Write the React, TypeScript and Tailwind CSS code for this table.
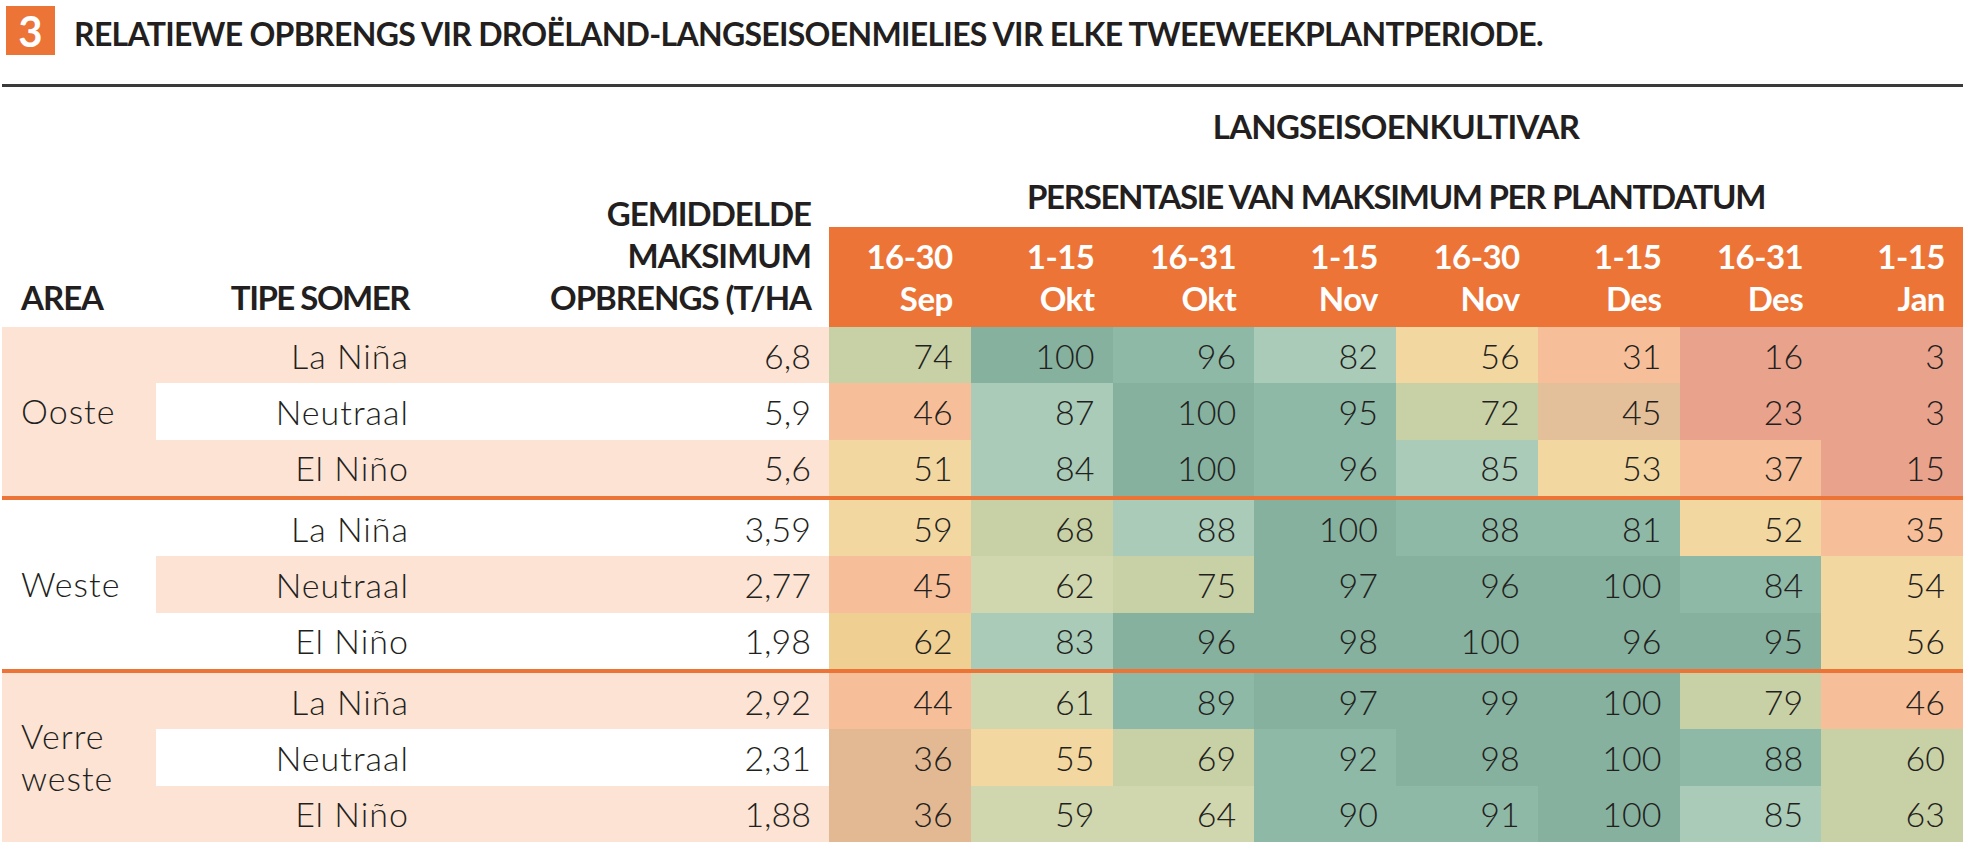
import React from 'react';

const COLS: [string, string][] = [
  ['16-30', 'Sep'],
  ['1-15', 'Okt'],
  ['16-31', 'Okt'],
  ['1-15', 'Nov'],
  ['16-30', 'Nov'],
  ['1-15', 'Des'],
  ['16-31', 'Des'],
  ['1-15', 'Jan'],
];

const T1 = 'bg-[#85b19e]';
const T2 = 'bg-[#8fb9a7]';
const T3 = 'bg-[#a9cbb8]';
const S1 = 'bg-[#c8d1a6]';
const S2 = 'bg-[#d0d7ae]';
const Y = 'bg-[#f2d7a1]';
const Y2 = 'bg-[#efcf92]';
const P = 'bg-[#f7bf99]';
const TN = 'bg-[#e3bf9a]';
const TN2 = 'bg-[#e3b993]';
const R = 'bg-[#e9a28c]';

type Row = { tipe: string; gem: string; vals: number[]; colors: string[] };
type Group = { area: string[]; rows: Row[] };

const GROUPS: Group[] = [
  {
    area: ['Ooste'],
    rows: [
      { tipe: 'La Niña', gem: '6,8', vals: [74, 100, 96, 82, 56, 31, 16, 3], colors: [S1, T1, T2, T3, Y, P, R, R] },
      { tipe: 'Neutraal', gem: '5,9', vals: [46, 87, 100, 95, 72, 45, 23, 3], colors: [P, T3, T1, T2, S1, TN, R, R] },
      { tipe: 'El Niño', gem: '5,6', vals: [51, 84, 100, 96, 85, 53, 37, 15], colors: [Y, T3, T1, T2, T3, Y, P, R] },
    ],
  },
  {
    area: ['Weste'],
    rows: [
      { tipe: 'La Niña', gem: '3,59', vals: [59, 68, 88, 100, 88, 81, 52, 35], colors: [Y, S1, T3, T1, T2, T2, Y, P] },
      { tipe: 'Neutraal', gem: '2,77', vals: [45, 62, 75, 97, 96, 100, 84, 54], colors: [P, S2, S1, T1, T1, T1, T2, Y] },
      { tipe: 'El Niño', gem: '1,98', vals: [62, 83, 96, 98, 100, 96, 95, 56], colors: [Y2, T3, T1, T1, T1, T1, T1, Y] },
    ],
  },
  {
    area: ['Verre', 'weste'],
    rows: [
      { tipe: 'La Niña', gem: '2,92', vals: [44, 61, 89, 97, 99, 100, 79, 46], colors: [P, S2, T2, T1, T1, T1, S1, P] },
      { tipe: 'Neutraal', gem: '2,31', vals: [36, 55, 69, 92, 98, 100, 88, 60], colors: [TN2, Y, S1, T2, T1, T1, T2, S1] },
      { tipe: 'El Niño', gem: '1,88', vals: [36, 59, 64, 90, 91, 100, 85, 63], colors: [TN2, S2, S2, T2, T2, T1, T3, S1] },
    ],
  },
];

function Separator() {
  return <div className="ml-[2px] w-[1961px] h-[4px] bg-[#ec7437]" />;
}

export default function App() {
  let rowIndex = 0;
  return (
    <div className="w-[1971px] h-[850px] bg-white text-[#231f20] font-['Lato',sans-serif] overflow-hidden">
      {/* Title */}
      <div className="flex items-start h-[84px] pt-[6px] pl-[6px]">
        <div className="w-[49px] h-[49px] bg-[#ec7437] flex items-center justify-center text-white font-bold text-[42px] leading-none">
          3
        </div>
        <h1 className="ml-[19px] mt-[8px] text-[32px] leading-[40px] font-bold tracking-[-0.7px]">
          RELATIEWE OPBRENGS VIR DROËLAND-LANGSEISOENMIELIES VIR ELKE TWEEWEEKPLANTPERIODE.
        </h1>
      </div>
      <div className="ml-[2px] w-[1961px] h-[3px] bg-[#3a3a3a]" />

      {/* Header */}
      <div className="flex h-[240px] ml-[2px]">
        <div className="w-[827px] grid grid-cols-[154px_272px_401px] items-end pb-[9px] text-[33px] leading-[42px] font-bold tracking-[-1px]">
          <div className="pl-[19px]">AREA</div>
          <div className="text-right pr-[19px] tracking-[-1.5px]">TIPE SOMER</div>
          <div className="text-right pr-[18px]">
            <div>GEMIDDELDE</div>
            <div>MAKSIMUM</div>
            <div>OPBRENGS (T/HA</div>
          </div>
        </div>
        <div className="w-[1134px] flex flex-col">
          <div className="pt-[19px] h-[59px] text-center text-[33px] leading-[40px] font-bold tracking-[-0.8px]">
            LANGSEISOENKULTIVAR
          </div>
          <div className="mt-[30px] h-[40px] text-center text-[33px] leading-[40px] font-bold tracking-[-1.3px]">
            PERSENTASIE VAN MAKSIMUM PER PLANTDATUM
          </div>
          <div className="mt-auto h-[100px] bg-[#ec7437] grid grid-cols-8 text-white text-[33px] leading-[42px] font-bold tracking-[-0.5px]">
            {COLS.map(([a, b], i) => (
              <div key={i} className="flex flex-col items-end justify-center pr-[18px]">
                <div>{a}</div>
                <div>{b}</div>
              </div>
            ))}
          </div>
        </div>
      </div>

      {/* Body */}
      {GROUPS.map((g, gi) => (
        <React.Fragment key={gi}>
          {gi > 0 && <Separator />}
          <div className="flex ml-[2px]">
            <div
              className={`w-[154px] flex flex-col justify-center pl-[19px] text-[34px] leading-[42px] font-light tracking-[1px] ${
                gi % 2 === 0 ? 'bg-[#fce3d4]' : 'bg-white'
              }`}
            >
              {g.area.map((t) => (
                <div key={t}>{t}</div>
              ))}
            </div>
            <div className="flex flex-col">
              {g.rows.map((r) => {
                const pink = rowIndex++ % 2 === 0;
                return (
                  <div key={r.tipe} className="flex h-[56.33px] text-[34px] font-light">
                    <div className={`flex ${pink ? 'bg-[#fce3d4]' : 'bg-white'}`}>
                      <div className="w-[272px] flex items-center justify-end pr-[19px] tracking-[1px]">{r.tipe}</div>
                      <div className="w-[401px] flex items-center justify-end pr-[18px]">{r.gem}</div>
                    </div>
                    {r.vals.map((v, i) => (
                      <div key={i} className={`w-[141.75px] flex items-center justify-end pr-[18px] ${r.colors[i]}`}>
                        {v}
                      </div>
                    ))}
                  </div>
                );
              })}
            </div>
          </div>
        </React.Fragment>
      ))}
    </div>
  );
}
